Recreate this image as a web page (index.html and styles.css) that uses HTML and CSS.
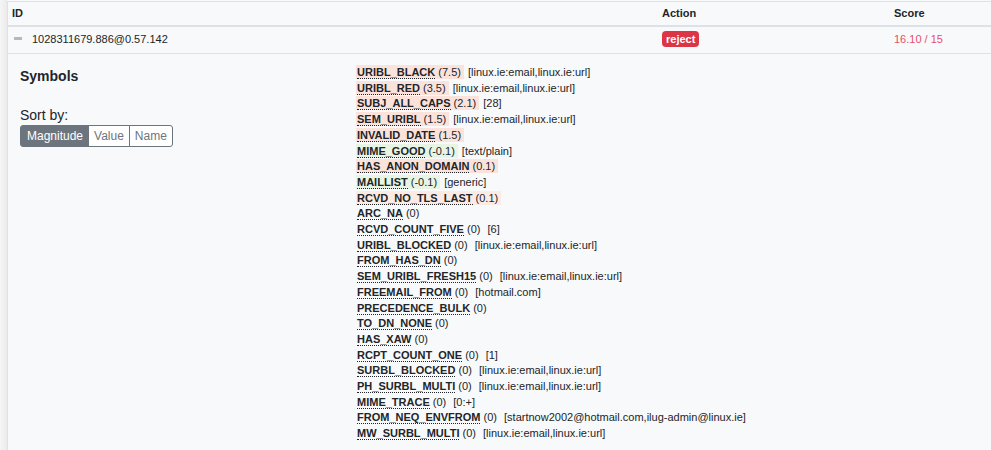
FILE: index.html
```html
<!DOCTYPE html>
<html lang="en">
<head>
    <meta charset="UTF-8">
    <title>History</title>
    <link rel="stylesheet" href="styles.css">
</head>
<body>

    <div class="history">
        <table class="history-table">
            <thead>
                <tr>
                    <th class="col-id">ID</th>
                    <th class="col-action">Action</th>
                    <th class="col-score">Score</th>
                </tr>
            </thead>
            <tbody>
                <tr class="row-main">
                    <td><span class="toggle"></span>1028311679.886@0.57.142</td>
                    <td><span class="badge-reject">reject</span></td>
                    <td class="score">16.10 / 15</td>
                </tr>
                <tr class="row-detail">
                    <td colspan="3">
                        <div class="detail">
                            <div class="detail-side">
                                <div class="detail-title">Symbols</div>
                                <div class="sort-label">Sort by:</div>
                                <div class="btn-group">
                                    <button class="btn active">Magnitude</button>
                                    <button class="btn">Value</button>
                                    <button class="btn">Name</button>
                                </div>
                            </div>
                            <div class="symbols" id="symbols"></div>
                        </div>
                    </td>
                </tr>
            </tbody>
        </table>
    </div>

    <script>
        // name, score, options, highlight
        const symbols = [
            ['URIBL_BLACK', '7.5', '[linux.ie:email,linux.ie:url]', 'bad'],
            ['URIBL_RED', '3.5', '[linux.ie:email,linux.ie:url]', 'bad'],
            ['SUBJ_ALL_CAPS', '2.1', '[28]', 'bad'],
            ['SEM_URIBL', '1.5', '[linux.ie:email,linux.ie:url]', 'bad'],
            ['INVALID_DATE', '1.5', '', 'bad'],
            ['MIME_GOOD', '-0.1', '[text/plain]', 'good'],
            ['HAS_ANON_DOMAIN', '0.1', '', 'bad'],
            ['MAILLIST', '-0.1', '[generic]', 'good'],
            ['RCVD_NO_TLS_LAST', '0.1', '', 'weak'],
            ['ARC_NA', '0', '', ''],
            ['RCVD_COUNT_FIVE', '0', '[6]', ''],
            ['URIBL_BLOCKED', '0', '[linux.ie:email,linux.ie:url]', ''],
            ['FROM_HAS_DN', '0', '', ''],
            ['SEM_URIBL_FRESH15', '0', '[linux.ie:email,linux.ie:url]', ''],
            ['FREEMAIL_FROM', '0', '[hotmail.com]', ''],
            ['PRECEDENCE_BULK', '0', '', ''],
            ['TO_DN_NONE', '0', '', ''],
            ['HAS_XAW', '0', '', ''],
            ['RCPT_COUNT_ONE', '0', '[1]', ''],
            ['SURBL_BLOCKED', '0', '[linux.ie:email,linux.ie:url]', ''],
            ['PH_SURBL_MULTI', '0', '[linux.ie:email,linux.ie:url]', ''],
            ['MIME_TRACE', '0', '[0:+]', ''],
            ['FROM_NEQ_ENVFROM', '0', '[startnow2002@hotmail.com,ilug-admin@linux.ie]', ''],
            ['MW_SURBL_MULTI', '0', '[linux.ie:email,linux.ie:url]', '']
        ];

        const list = document.getElementById('symbols');
        list.innerHTML = symbols.map(s => {
            const cls = s[3] ? 'sym sym-' + s[3] : 'sym';
            const opts = s[2] ? ' <span class="opts">' + s[2] + '</span>' : '';
            return `<div class="sym-line"><span class="${cls}"><abbr>${s[0]}</abbr> (${s[1]})</span>${opts}</div>`;
        }).join('');
    </script>

</body>
</html>
```

FILE: styles.css
```css
body {
    margin: 0;
    font-family: "Liberation Sans", Arial, sans-serif;
    font-size: 11px;
    color: #212529;
    background: linear-gradient(to right, #f6f6f6 0, #ebebeb 7px, #f8f9fa 7px);
    height: 450px;
    overflow: hidden;
}

.history {
    margin-left: 7px;
    border-left: 1px solid #dee2e6;
    background-color: #f8f9fa;
    height: 450px;
}

.history-table {
    width: 100%;
    border-collapse: collapse;
    table-layout: fixed;
    border-top: 1px solid #dee2e6;
    margin-top: 1px;
}

.history-table th {
    text-align: left;
    font-weight: bold;
    padding: 4px 4px 5px;
    height: 14px;
    border-bottom: 2px solid #dee2e6;
}

.col-id {
    width: 642px;
}

.col-action {
    width: 224px;
}

.row-main td {
    padding: 4px 4px 6px;
    height: 12px;
    border-bottom: 1px solid #dee2e6;
    vertical-align: middle;
}

.toggle {
    display: inline-block;
    width: 8px;
    height: 3px;
    background-color: #b5b9bd;
    margin: 0 10px 3px 2px;
    vertical-align: middle;
}

.badge-reject {
    display: inline-block;
    background-color: #dc3545;
    color: #fff;
    font-weight: bold;
    padding: 2px 4px 2px;
    border-radius: 4px;
    line-height: 12px;
}

.score {
    color: #e6506a;
}

.row-detail td {
    padding: 0;
}

.detail {
    display: flex;
}

.detail-side {
    width: 336px;
    padding: 14px 0 0 12px;
}

.detail-title {
    font-size: 14px;
    font-weight: bold;
    line-height: 17px;
}

.sort-label {
    font-size: 14px;
    margin-top: 22px;
    line-height: 17px;
}

.btn-group {
    display: flex;
    margin-top: 1px;
}

.btn {
    font-family: "Liberation Sans", Arial, sans-serif;
    font-size: 12px;
    background-color: #fff;
    color: #6c757d;
    border: 1px solid #6c757d;
    padding: 4px 5px 3px;
    line-height: 13px;
    margin-left: -1px;
}

.btn:first-child {
    border-radius: 3px 0 0 3px;
    margin-left: 0;
    padding: 4px 5px 3px 6px;
}

.btn:last-child {
    border-radius: 0 3px 3px 0;
}

.btn.active {
    background-color: #6c757d;
    color: #fff;
}

.symbols {
    padding-top: 11px;
}

.sym-line {
    line-height: 15.7px;
    white-space: nowrap;
}

.sym {
    padding: 1px 3px 1px 1px;
}

.sym abbr {
    font-weight: bold;
    text-decoration: none;
    border-bottom: 1px dotted #212529;
}

.sym-bad {
    background-color: #fbe3dc;
}

.sym-weak {
    background-color: #fcebe5;
}

.sym-good {
    background-color: #e8f5e4;
}

.opts {
    margin-left: 1px;
}
```
